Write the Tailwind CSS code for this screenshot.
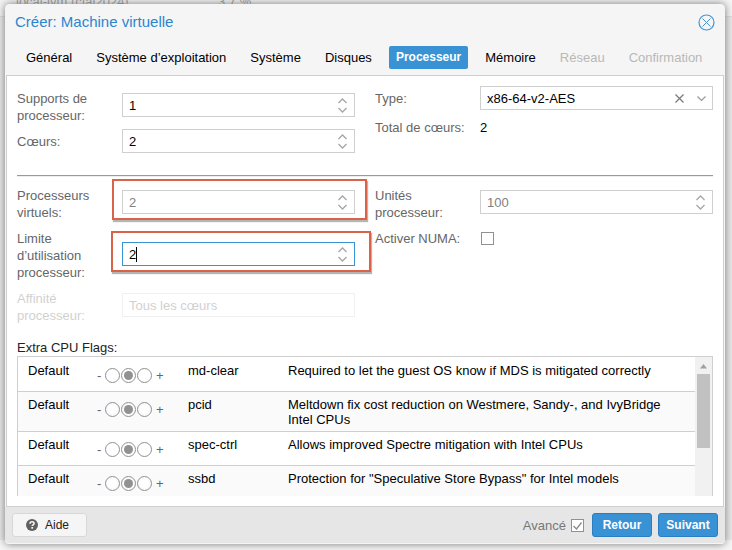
<!DOCTYPE html>
<html lang="fr">
<head>
<meta charset="utf-8">
<meta name="viewport" content="width=device-width, initial-scale=1">
<title>Créer: Machine virtuelle</title>
<script src="https://cdn.jsdelivr.net/npm/@tailwindcss/browser@4"></script>
</head>
<body class="relative min-h-screen overflow-hidden bg-[#e9e9e9] font-['Liberation_Sans',Arial,sans-serif] text-[13px] leading-[17px] text-black">
<svg class="hidden" aria-hidden="true">
  <symbol id="spin" viewBox="0 0 9 15"><path d="M.5 5 4.500 1 8.500 5M.5 10l4 4 4-4" fill="none" stroke="#a6a6a6" stroke-width="1.300"/></symbol>
</svg>

<!-- Page behind the dialog -->
<div class="absolute inset-x-0 top-0 flex h-[17px] border-b border-[#dcdcdc] bg-[#f5f5f5] text-[#999]" aria-hidden="true">
  <span class="-mt-[7px] w-[218px] pl-4">local-lvm (cfal2024)</span><span class="-mt-[7px]">3.7 %</span>
</div>
<div class="absolute inset-x-0 bottom-0 h-[10px] bg-[#f6f6f6]" aria-hidden="true"></div>

<main class="relative mt-1 mr-[7px] ml-[5px] rounded-[4px] border border-[#f5f5f5] bg-[#f5f5f5] shadow-[0_0_9px_#777]">
  <header class="flex h-[34px] items-center justify-between pr-[9px] pl-[9px]">
    <h1 class="text-[15px] leading-[20px] text-[#2b86cf]">Créer: Machine virtuelle</h1>
    <button type="button" aria-label="Fermer" class="size-[17px]">
      <svg viewBox="0 0 17 17" class="size-[17px]" fill="none" stroke="#4595d4"><circle cx="8.500" cy="8.500" r="7.500" stroke-width="1.200"/><path d="m4.500 4.500 8 8m0-8-8 8"/></svg>
    </button>
  </header>

  <nav class="flex h-[36px] items-center gap-[10px] pl-[13px] whitespace-nowrap">
    <button type="button" class="h-[23px] px-[7px]">Général</button>
    <button type="button" class="h-[23px] px-[7px]">Système d’exploitation</button>
    <button type="button" class="h-[23px] px-[7px]">Système</button>
    <button type="button" class="h-[23px] px-[7px]">Disques</button>
    <button type="button" class="h-[23px] rounded-[2px] bg-[#3892d4] px-[7px] text-[12px] font-bold text-white">Processeur</button>
    <button type="button" class="h-[23px] px-[7px]">Mémoire</button>
    <button type="button" disabled class="h-[23px] px-[7px] text-[#b8b8b8]">Réseau</button>
    <button type="button" disabled class="h-[23px] px-[7px] text-[#b8b8b8]">Confirmation</button>
  </nav>

  <section class="border border-[#cfcfcf] bg-white px-[10px] pt-[10px] pb-[10px]">
    <div class="flex gap-5 text-[#666]">
      <div class="flex flex-1 flex-col gap-1">
        <div class="flex items-start">
          <label for="sockets" class="w-[105px] pt-1 pr-[5px] pb-px">Supports de processeur:</label>
          <div class="mt-[7px] flex h-6 flex-1 items-center border border-[#cfcfcf] bg-white pr-[7px]">
            <input id="sockets" value="1" class="w-0 flex-1 pl-[6px] text-black outline-none">
            <svg class="h-[15px] w-[9px]"><use href="#spin"/></svg>
          </div>
        </div>
        <div class="flex items-start">
          <label for="cores" class="w-[105px] pt-1 pr-[5px]">Cœurs:</label>
          <div class="flex h-6 flex-1 items-center border border-[#cfcfcf] bg-white pr-[7px]">
            <input id="cores" value="2" class="w-0 flex-1 pl-[6px] text-black outline-none">
            <svg class="h-[15px] w-[9px]"><use href="#spin"/></svg>
          </div>
        </div>
      </div>
      <div class="flex flex-1 flex-col gap-1">
        <div class="flex items-start">
          <label for="cputype" class="w-[105px] pt-1 pr-[5px]">Type:</label>
          <div class="flex h-6 flex-1 items-center border border-[#cfcfcf] bg-white pr-[6px]">
            <select id="cputype" class="w-0 flex-1 appearance-none pl-[6px] text-black outline-none"><option>x86-64-v2-AES</option></select>
            <button type="button" aria-label="Effacer" class="mr-[13px] size-[9px]"><svg viewBox="0 0 9 9" class="size-[9px]" fill="none" stroke="#777" stroke-width="1.200"><path d="m.5.5 8 8m0-8-8 8"/></svg></button>
            <svg viewBox="0 0 9 9" class="size-[9px]" fill="none" stroke="#999" stroke-width="1.200"><path d="m.5 2.500 4 4 4-4"/></svg>
          </div>
        </div>
        <div class="flex items-start pt-[5px] leading-[17px]">
          <span class="w-[105px] whitespace-nowrap">Total de cœurs:</span>
          <output class="text-black">2</output>
        </div>
      </div>
    </div>

    <hr class="mt-[22px] mb-[6px] border-t border-b border-t-[#999] border-b-[#eee]">

    <div class="flex gap-5 text-[#666]">
      <div class="flex flex-1 flex-col gap-1">
        <div class="relative flex items-start">
          <label for="vcpus" class="w-[105px] pt-1 pr-[5px] pb-px">Processeurs virtuels:</label>
          <div class="mt-[7px] flex h-6 flex-1 items-center border border-[#cfcfcf] bg-white pr-[7px]">
            <input id="vcpus" placeholder="2" class="w-0 flex-1 pl-[6px] outline-none placeholder:text-[#808080]">
            <svg class="h-[15px] w-[9px]"><use href="#spin"/></svg>
          </div>
          <span class="pointer-events-none absolute top-[-4px] right-[-12px] left-[95px] h-[41px] border-2 border-[#d86346] shadow-[1px_2px_1px_#b5b5b5]"></span>
        </div>
        <div class="relative flex items-center">
          <label for="cpulimit" class="w-[105px] pt-1 pr-[5px] pb-px">Limite d’utilisation processeur:</label>
          <div class="relative flex h-6 flex-1 items-center border border-[#3892d4] bg-white pr-[7px]">
            <input id="cpulimit" value="2" class="w-0 flex-1 pl-[6px] text-black outline-none">
            <span class="absolute top-[4px] left-[13px] h-[15px] w-px bg-black"></span>
            <svg class="h-[15px] w-[9px]"><use href="#spin"/></svg>
          </div>
          <span class="pointer-events-none absolute top-[5px] right-[-16px] left-[94px] h-[41px] border-2 border-[#d86346] shadow-[1px_2px_1px_#b5b5b5]"></span>
        </div>
        <div class="flex items-start opacity-30">
          <label for="affinity" class="w-[105px] pt-1 pr-[5px] pb-px">Affinité processeur:</label>
          <div class="mt-[7px] flex h-6 flex-1 items-center border border-[#cfcfcf] bg-white pr-[7px]">
            <input id="affinity" disabled placeholder="Tous les cœurs" class="w-0 flex-1 pl-[6px] outline-none placeholder:text-[#666]">
          </div>
        </div>
      </div>
      <div class="flex flex-1 flex-col gap-1">
        <div class="flex items-start">
          <label for="units" class="w-[105px] pt-1 pr-[5px] pb-px">Unités processeur:</label>
          <div class="mt-[7px] flex h-6 flex-1 items-center border border-[#cfcfcf] bg-white pr-[7px]">
            <input id="units" placeholder="100" class="w-0 flex-1 pl-[6px] outline-none placeholder:text-[#808080]">
            <svg class="h-[15px] w-[9px]"><use href="#spin"/></svg>
          </div>
        </div>
        <div class="flex items-start">
          <label for="numa" class="w-[105px] pt-1">Activer NUMA:</label>
          <input id="numa" type="checkbox" class="mt-[6px] ml-px size-[13px] appearance-none border border-[#919191] bg-white">
        </div>
      </div>
    </div>

    <h2 class="mt-[14px] text-[#222]">Extra CPU Flags:</h2>
    <div class="flex h-[140px] border border-b-0 border-[#cfcfcf]">
      <div class="flex-1 overflow-hidden pt-px">
        <table class="w-full table-fixed border-separate border-spacing-0 text-left align-top leading-[15px]">
          <colgroup><col class="w-[70px]"><col class="w-[90px]"><col class="w-[100px]"><col></colgroup>
          <tbody id="flags"></tbody>
        </table>
      </div>
      <div class="flex w-[17px] flex-col items-center bg-[#f1f1f1]" aria-hidden="true">
        <svg class="h-[17px] w-[9px]" viewBox="0 0 9 17"><path d="M1 11.500 4.500 7 8 11.500z" fill="#a0a0a0"/></svg>
        <div class="h-[74px] w-[13px] bg-[#c1c1c1]"></div>
      </div>
    </div>
  </section>

  <footer class="-mx-px -mb-px flex h-[37px] items-center rounded-b-[4px] border-b border-[#f5f5f5] bg-[#e6e6e6] px-[7px] text-[12px]">
    <button type="button" class="flex h-6 w-[75px] items-center gap-[7px] rounded-[3px] border border-[#d8d8d8] bg-[#f5f5f5] pl-[13px] text-[#222]">
      <svg viewBox="0 0 12 12" class="size-[12px]"><circle cx="6" cy="6" r="6" fill="#606060"/><path d="M4 4.700C4 3.300 5 2.700 6.100 2.700c1.100 0 2 .7 2 1.700 0 1.400-1.900 1.400-1.900 2.700" fill="none" stroke="#f5f5f5" stroke-width="1.600"/><path d="M5.300 8h1.800v1.700H5.300z" fill="#f5f5f5"/></svg>
      Aide
    </button>
    <label for="advanced" class="ml-auto text-[13px] text-[#777]">Avancé</label>
    <span class="relative mr-2 ml-[5px] size-[13px]">
      <input id="advanced" type="checkbox" checked class="block size-[13px] appearance-none border border-[#919191] bg-white">
      <svg viewBox="0 0 13 13" class="pointer-events-none absolute inset-0 size-[13px]"><path d="m2.500 7 3 3 5-6.500" fill="none" stroke="#8a8a8a" stroke-width="1.300"/></svg>
    </span>
    <button type="button" class="mr-[6px] h-6 w-[60px] rounded-[3px] border border-[#2a7fc4] bg-[#3892d4] font-bold text-white">Retour</button>
    <button type="button" class="h-6 w-[60px] rounded-[3px] border border-[#2a7fc4] bg-[#3892d4] font-bold text-white">Suivant</button>
  </footer>
</main>

<script>
const flags = [
  ['md-clear', 'Required to let the guest OS know if MDS is mitigated correctly'],
  ['pcid', 'Meltdown fix cost reduction on Westmere, Sandy-, and IvyBridge Intel CPUs'],
  ['spec-ctrl', 'Allows improved Spectre mitigation with Intel CPUs'],
  ['ssbd', 'Protection for "Speculative Store Bypass" for Intel models'],
];
const radio = (name, value, on) => `<input type="radio" name="${name}" value="${value}" aria-label="${name} ${value}" ${on ? 'checked' : ''} class="size-[15px] appearance-none rounded-full border border-[#919191] bg-white p-[2px] bg-clip-content checked:bg-[#919191]">`;
document.getElementById('flags').innerHTML = flags.map(([name, text]) => `
  <tr class="h-[34px] align-top even:bg-[#fafafa]">
    <td class="border-b border-[#cfcfcf] pt-[5px] pl-[10px]">Default</td>
    <td class="border-b border-[#cfcfcf] pt-[10px] pl-[9px]"><div class="flex h-[15px] items-center gap-px text-[#666]"><span class="w-[7px]">-</span>${radio(name, 'off', false)}${radio(name, 'default', true)}${radio(name, 'on', false)}<span class="pl-[3px]">+</span></div></td>
    <td class="border-b border-[#cfcfcf] pt-[5px] pl-[10px]">${name}</td>
    <td class="border-b border-[#cfcfcf] px-[10px] pt-[5px] pb-1">${text}</td>
  </tr>`).join('');
</script>
</body>
</html>
